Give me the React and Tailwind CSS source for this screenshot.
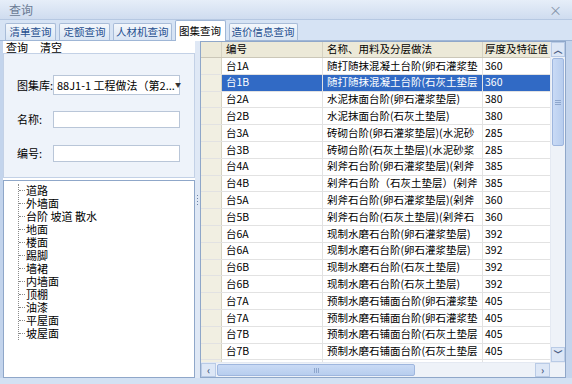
import React from 'react'

const font = { fontFamily: '"Noto Sans CJK SC", "Liberation Sans", sans-serif' }

const tabs = ['清单查询', '定额查询', '人材机查询', '图集查询', '造价信息查询']

const tree = ['道路', '外墙面', '台阶 坡道 散水', '地面', '楼面', '踢脚', '墙裙', '内墙面', '顶棚', '油漆', '平屋面', '坡屋面']

const rows = [
  ['台1A', '随打随抹混凝土台阶(卵石灌浆垫', '360'],
  ['台1B', '随打随抹混凝土台阶(石灰土垫层', '360'],
  ['台2A', '水泥抹面台阶(卵石灌浆垫层)', '380'],
  ['台2B', '水泥抹面台阶(石灰土垫层)', '380'],
  ['台3A', '砖砌台阶(卵石灌浆垫层)(水泥砂', '285'],
  ['台3B', '砖砌台阶(石灰土垫层)(水泥砂浆', '285'],
  ['台4A', '剁斧石台阶(卵石灌浆垫层)(剁斧', '385'],
  ['台4B', '剁斧石台阶（石灰土垫层）(剁斧', '385'],
  ['台5A', '剁斧石台阶(卵石灌浆垫层)(剁斧', '360'],
  ['台5B', '剁斧石台阶(石灰土垫层)(剁斧石', '360'],
  ['台6A', '现制水磨石台阶(卵石灌浆垫层)', '392'],
  ['台6A', '现制水磨石台阶(卵石灌浆垫层)', '392'],
  ['台6B', '现制水磨石台阶(石灰土垫层)', '392'],
  ['台6B', '现制水磨石台阶(石灰土垫层)', '392'],
  ['台7A', '预制水磨石铺面台阶(卵石灌浆垫', '405'],
  ['台7A', '预制水磨石铺面台阶(卵石灌浆垫', '405'],
  ['台7B', '预制水磨石铺面台阶(石灰土垫层', '405'],
  ['台7B', '预制水磨石铺面台阶(石灰土垫层', '405'],
  ['台8A', '铺块料面层台阶(卵石灌浆垫层)', '360'],
]

function Field({ label, children }) {
  return (
    <div className="flex items-center h-[18px]">
      <span className="w-[36px] whitespace-nowrap text-black">{label}</span>
      {children}
    </div>
  )
}

export default function App() {
  return (
    <div className="w-[572px] h-[384px] overflow-hidden bg-[#d3e1f3] flex flex-col text-[11px] leading-none" style={font}>
      {/* title bar */}
      <div className="h-[20px] flex items-center justify-between px-[9px] bg-gradient-to-b from-[#e6eef9] to-[#cfdcef] border-b border-[#b6c8e2]">
        <span className="text-[12px] text-[#6b7b94]">查询</span>
        <span className="text-[13px] text-[#8594aa] mr-[1px]">×</span>
      </div>

      {/* tabs */}
      <div className="h-[20px] flex items-end pl-[5px] gap-[3px] bg-[#d6e3f4] text-[10.5px]">
        {tabs.map((t, i) =>
          i === 3 ? (
            <div key={t} className="h-[21px] -mb-px min-w-[51px] px-[2px] flex items-center justify-center bg-white border border-b-0 border-[#9fb6d6] rounded-t-[2px] text-black z-10">
              {t}
            </div>
          ) : (
            <div key={t} className="h-[17px] min-w-[51px] px-[2px] flex items-center justify-center bg-gradient-to-b from-[#f3f7fc] to-[#d9e5f4] border border-b-0 border-[#a8bcd8] rounded-t-[2px] text-[#1f4f8f]">
              {t}
            </div>
          )
        )}
      </div>

      {/* body */}
      <div className="flex flex-1 min-h-0 border-t border-[#9fb6d6]">
        {/* left panel */}
        <div className="w-[195px] flex flex-col bg-white border-l-[3px] border-[#c3d4ec]">
          <div className="h-[12px] flex items-center gap-[12px] pl-[3px] bg-white text-black">
            <span>查询</span>
            <span>清空</span>
          </div>
          <div className="h-[125px] bg-[#eef3fa] border border-[#c3d1e6] flex flex-col pl-[13px] pt-[22px] gap-[16px]">
            <Field label="图集库:">
              <div className="w-[127px] h-[20px] bg-white border border-[#b9c6d8] flex items-center justify-between pl-[3px] pr-[6px]">
                <span className="whitespace-nowrap">88J1-1 工程做法（第2...</span>
                <span className="text-[6px] text-[#333]">▼</span>
              </div>
            </Field>
            <Field label="名称:">
              <div className="w-[127px] h-[17px] bg-white border border-[#b9c6d8]" />
            </Field>
            <Field label="编号:">
              <div className="w-[127px] h-[17px] bg-white border border-[#b9c6d8]" />
            </Field>
          </div>
          <div className="flex-1 mt-[2px] bg-white border border-[#8fa7c9] pt-[3px] pl-[14px]">
            <div className="border-l border-dotted border-[#8a8a8a] w-fit">
              {tree.map((t) => (
                <div key={t} className="h-[13px] flex items-center">
                  <span className="w-[6px] border-t border-dotted border-[#8a8a8a]" />
                  <span className="pl-[1px] whitespace-nowrap text-black">{t}</span>
                </div>
              ))}
            </div>
          </div>
        </div>

        {/* splitter */}
        <div className="w-[5px] bg-[#dfe8f5] flex flex-col items-center pt-[154px] gap-[2px]">
          {[0, 1, 2, 3].map((i) => (
            <span key={i} className="w-[1px] h-[1px] bg-[#6e84a6]" />
          ))}
        </div>

        {/* grid */}
        <div className="w-[366px] flex flex-col bg-white border border-[#8fa7c9] overflow-hidden text-[10.5px]">
          <div className="flex flex-1 min-h-0">
            <div className="flex-1 overflow-hidden">
              <div className="flex h-[16px] bg-[#ece9d8] border-b border-[#cbc7b8]">
                <div className="w-[21px] shrink-0 border-r border-[#d6d2c2]" />
                <div className="w-[101px] shrink-0 pl-[4px] flex items-center border-r border-[#d6d2c2]">编号</div>
                <div className="w-[160px] shrink-0 pl-[4px] flex items-center border-r border-[#d6d2c2]">名称、用料及分层做法</div>
                <div className="flex-1 pl-[2px] flex items-center whitespace-nowrap overflow-hidden">厚度及特征值</div>
              </div>
              {rows.map((r, i) => {
                const sel = i === 1
                return (
                  <div key={i} className={`flex h-[16.8px] border-b border-[#e2e2e2] ${sel ? 'text-white' : 'text-black'}`}>
                    <div className="w-[21px] shrink-0 bg-[#f1efe2] border-r border-[#d6d2c2]" />
                    <div className={`w-[101px] shrink-0 pl-[4px] flex items-center border-r border-[#e2e2e2] ${sel ? 'bg-[#316ac5]' : ''}`}>{r[0]}</div>
                    <div className={`w-[160px] shrink-0 pl-[4px] flex items-center border-r border-[#e2e2e2] whitespace-nowrap overflow-hidden ${sel ? 'bg-[#316ac5]' : ''}`}>{r[1]}</div>
                    <div className={`flex-1 pl-[2px] flex items-center whitespace-nowrap overflow-hidden ${sel ? 'bg-[#316ac5]' : ''}`}>{r[2]}</div>
                  </div>
                )
              })}
            </div>
            {/* vertical scrollbar */}
            <div className="w-[15px] shrink-0 bg-[#eef2f8] flex flex-col border-l border-[#e4e9f2]">
              <div className="h-[15px] flex items-center justify-center bg-[#dde7f6] border border-[#b9cbe6] text-[#4d6185] text-[9px] font-bold">︿</div>
              <div className="h-[88px] mx-[1px] mt-[1px] bg-gradient-to-r from-[#c9daf5] to-[#b7cdee] border border-[#9eb6de] rounded-[2px] flex flex-col items-center justify-center gap-[1px]">
                <span className="w-[6px] h-px bg-[#8ea6cc]" />
                <span className="w-[6px] h-px bg-[#8ea6cc]" />
                <span className="w-[6px] h-px bg-[#8ea6cc]" />
              </div>
              <div className="flex-1" />
              <div className="h-[15px] flex items-center justify-center bg-[#dde7f6] border border-[#b9cbe6] text-[#4d6185] text-[9px] font-bold">﹀</div>
            </div>
          </div>
          {/* horizontal scrollbar */}
          <div className="h-[15px] shrink-0 flex bg-[#eef2f8] border-t border-[#e4e9f2]">
            <div className="w-[15px] flex items-center justify-center bg-[#dde7f6] border border-[#b9cbe6] text-[#4d6185] text-[10px] font-bold">‹</div>
            <div className="w-[198px] ml-[1px] my-[1px] bg-gradient-to-b from-[#c9daf5] to-[#b7cdee] border border-[#9eb6de] rounded-[2px] flex items-center justify-center gap-[1px]">
              <span className="w-px h-[5px] bg-[#8ea6cc]" />
              <span className="w-px h-[5px] bg-[#8ea6cc]" />
              <span className="w-px h-[5px] bg-[#8ea6cc]" />
            </div>
            <div className="flex-1" />
            <div className="w-[15px] flex items-center justify-center bg-[#dde7f6] border border-[#b9cbe6] text-[#4d6185] text-[10px] font-bold">›</div>
            <div className="w-[15px] bg-[#eef2f8]" />
          </div>
        </div>
        <div className="flex-1 bg-[#c3d4ec]" />
      </div>
      <div className="h-[6px] bg-[#d3e1f3]" />
    </div>
  )
}
